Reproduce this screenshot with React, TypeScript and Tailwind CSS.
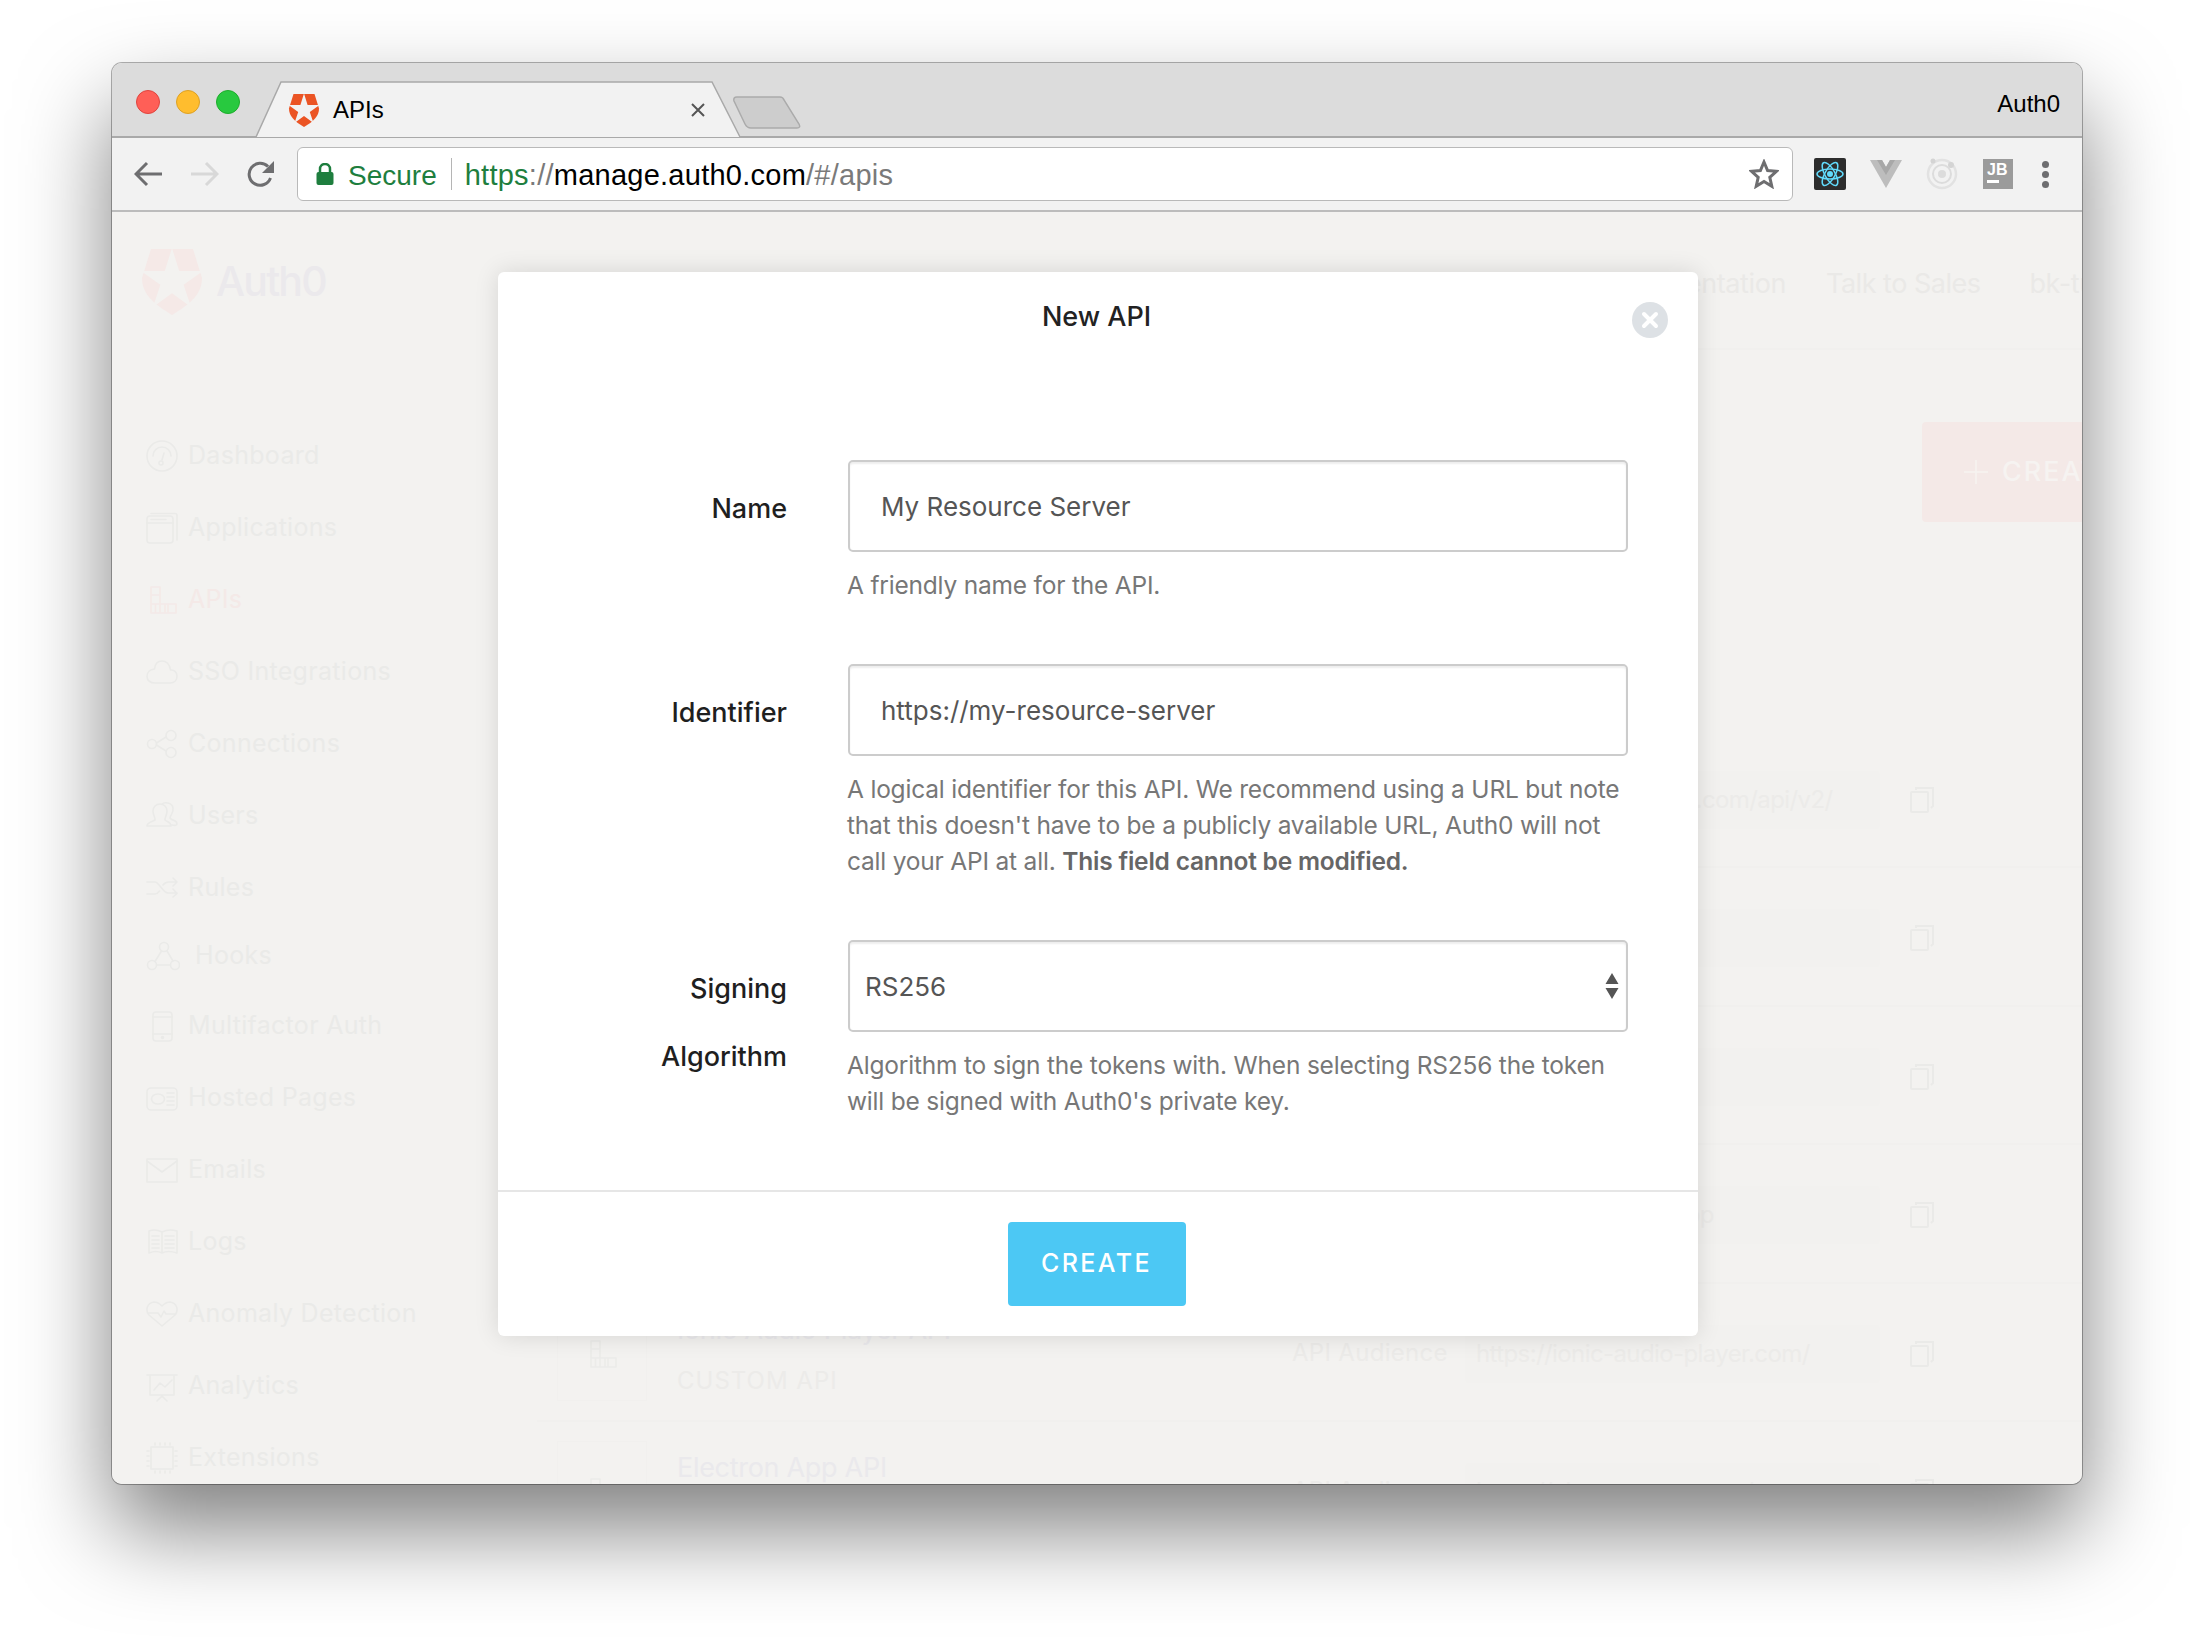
import React from "react";

const ui = "font-['Inter','Liberation_Sans',sans-serif]";
const chrome = "font-['Liberation_Sans',Arial,sans-serif]";

function Shield({ className, fill, star }: { className: string; fill: string; star: string }) {
  return (
    <svg viewBox="0 0 60 66" className={className}>
      <path d="M9 0H51L60 29C60 44 50 54 30 66C10 54 0 44 0 29Z" fill={fill} />
      <polygon fill={star} points="30,-1 37.2,22.1 61,22 41.6,35.8 49,58 30,44.2 11,58 18.4,35.8 -1,22 22.8,22.1" />
    </svg>
  );
}

const S = ({ children, w = 32, h = 32, vb }: { children: React.ReactNode; w?: number; h?: number; vb?: string }) => (
  <svg width={w} height={h} viewBox={vb ?? `0 0 ${w} ${h}`} fill="none" stroke="currentColor" strokeWidth="1.6" strokeLinecap="round" strokeLinejoin="round" className="shrink-0">
    {children}
  </svg>
);

const icons: Record<string, React.ReactNode> = {
  dashboard: <S><circle cx="16" cy="16" r="15" /><path d="M7 16a9 9 0 0 1 18 0M18 13l-2 7" /><circle cx="15" cy="23" r="2" /></S>,
  apps: <S><rect x="1" y="4" width="26" height="27" rx="3" /><path d="M1 11H27M5 7.500H20M5 1.500H29a2 2 0 0 1 2 2V28" /></S>,
  apis: <S><path d="M5 3H14V29H5ZM5 11H14M5 20H22V29H14M14 20H22M22 20H30V29H22M9.500 20V29M19 20V29" /></S>,
  sso: <S><path d="M9 27H24C28.500 27 31 24 31 20C31 16 28 13.500 24.500 14C24 8 20 5 16 5C12 5 9 8 8.500 13C4 13.500 1 16.500 1 20.500C1 24.500 4.500 27 9 27Z" /></S>,
  conn: <S><circle cx="6" cy="16" r="4.500" /><circle cx="25" cy="7.500" r="5" /><circle cx="25" cy="24.500" r="5" /><path d="M10.500 15L20 9M10.500 17L20 23" /></S>,
  users: <S><path d="M1 26C1 22 7 21.500 9 20C9.500 18 7 15 7 11C7 7 10 4 14 4C18 4 21 7 21 11C21 15 18.500 18 19 20C21 22 25 22 25 26ZM16 4C18 2 26 2 27 8C28 13 24 15 24 18C26 21 31 20 31 24C31 25 29 26 26 25" /></S>,
  rules: <S><path d="M1 10H9C13 10 17 21 22 21H31M27 17L31 21.500L27 25M1 22H9C11 22 12 21 13.500 19M17 13C18.500 11 20 10 23 10H31M27 6L31 10L27 14" /></S>,
  hooks: <S w={34}><circle cx="18" cy="7" r="4.500" /><circle cx="6" cy="25" r="4.500" /><circle cx="29" cy="25" r="4.500" /><path d="M15.500 11L9 21.500M21 11L27 21M11 25H24" /></S>,
  mfa: <S><rect x="7" y="2" width="19" height="29" rx="3" /><path d="M7 7H26M7 24H26" /><circle cx="16.500" cy="27.500" r="1" fill="currentColor" /></S>,
  hosted: <S><rect x="1" y="6" width="30" height="22" rx="4" /><ellipse cx="12" cy="17" rx="6.500" ry="5" /><path d="M21 11H28M21 15H28M21 19H28M21 23H28" /></S>,
  emails: <S><rect x="1" y="5" width="30" height="23" /><path d="M1 7L16 18L31 7" /></S>,
  logs: <S><path d="M3 5C8 3 12 4 16 6C20 4 24 3 31 5V27C25 25 20 25 16 27C12 25 8 25 3 27ZM16 6V27M6 10H13M6 14H13M6 18H13M6 22H13M19 10H28M19 14H28M19 18H28M19 22H28" /></S>,
  anomaly: <S><path d="M16 28L3 17C-1 12 1 5 8 4C12 4 14 6 16 8C18 6 20 4 24 4C31 5 33 12 29 17ZM3 15H12L15 19L18 13L20 16H30" /></S>,
  analytics: <S><path d="M1 5H31M4 5V25H28V5M16 25V27M11 31L16 26L21 31M8 20L14 13L19 17L26 10" /></S>,
  ext: <S><rect x="5" y="5" width="22" height="22" /><path d="M9 1V3M14 1V3M19 1V3M24 1V3M9 29V31M14 29V31M19 29V31M24 29V31M1 9H3M1 14H3M1 19H3M1 24H3M29 9H31M29 14H31M29 19H31M29 24H31" /></S>,
};

const nav = [
  { k: "dashboard", t: "Dashboard", c: "" },
  { k: "apps", t: "Applications", c: "" },
  { k: "apis", t: "APIs", c: "text-[#f4e9e7]" },
  { k: "sso", t: "SSO Integrations", c: "" },
  { k: "conn", t: "Connections", c: "" },
  { k: "users", t: "Users", c: "" },
  { k: "rules", t: "Rules", c: "" },
  { k: "hooks", t: "Hooks", c: "-mt-[4px]" },
  { k: "mfa", t: "Multifactor Auth", c: "-mt-[2px]" },
  { k: "hosted", t: "Hosted Pages", c: "" },
  { k: "emails", t: "Emails", c: "" },
  { k: "logs", t: "Logs", c: "" },
  { k: "anomaly", t: "Anomaly Detection", c: "" },
  { k: "analytics", t: "Analytics", c: "" },
  { k: "ext", t: "Extensions", c: "" },
];

const rows = [
  { t: "Auth0 Management API", s: "SYSTEM API", v: "https://bk-tuts.auth0.com/api/v2/" },
  { t: "Node API", s: "CUSTOM API", v: "https://node-api" },
  { t: "Ionic API", s: "CUSTOM API", v: "https://ionic-api" },
  { t: "Electron Desktop", s: "CUSTOM API", v: "https://a-desktop-app" },
  { t: "Ionic Audio Player API", s: "CUSTOM API", v: "https://ionic-audio-player.com/" },
  { t: "Electron App API", s: "CUSTOM API", v: "https://electron-app.com/" },
];

function Row({ r }: { r: (typeof rows)[number] }) {
  return (
    <div className="flex h-[138.400px] shrink-0 border-b-2 border-[#f1f0ee] text-[#ecebe9]">
      <div className="ml-[20px] flex h-[98px] w-[90px] shrink-0 items-center justify-center self-center border border-[#f1f0ee] pt-[4px]">
        {icons.apis}
      </div>
      <div className="ml-[30px] w-[615px] shrink-0 pt-[29px]">
        <div className="text-[27px] leading-[34px] tracking-[-0.3px] text-[#eae9ec]">{r.t}</div>
        <div className="mt-[16px] text-[24px] leading-[36px] tracking-[1px]">{r.s}</div>
      </div>
      <div className="flex h-[138px] w-[173px] shrink-0 items-center text-[24px] tracking-[0.3px]">API Audience</div>
      <div className="mt-[41px] flex h-[58px] w-[415px] shrink-0 items-center rounded-[4px] bg-[#f2f1ef] pl-[11px] text-[24px] whitespace-nowrap tracking-[-0.6px]">
        {r.v}
      </div>
      <svg width="24" height="28" viewBox="0 0 24 28" fill="none" stroke="#eaeae8" strokeWidth="2" className="ml-[30px] mt-[56px] shrink-0">
        <rect x="1" y="6" width="17" height="20" rx="1" />
        <path d="M6 4V2H23V20L21 22" />
      </svg>
    </div>
  );
}

function Background() {
  return (
    <div className={`flex h-full bg-[#f3f2f0] ${ui}`}>
      <aside className="w-[425px] shrink-0 pl-[30px] pt-[37px] text-[#eaeae8]">
        <div className="flex items-center">
          <Shield className="h-[66px] w-[60px]" fill="#f5e9e7" star="#f3f2f0" />
          <span className="ml-[14px] text-[41px] font-medium tracking-[-1.800px] text-[#ebe9ec]">Auth0</span>
        </div>
        <div className="mt-[105px]">
          {nav.map((n) => (
            <div key={n.t} className={`flex h-[72px] items-center pl-[4px] text-[25px] tracking-[0.3px] ${n.c}`}>
              {icons[n.k]}
              <span className={n.k === "hooks" ? "ml-[15px]" : "ml-[10px]"}>{n.t}</span>
            </div>
          ))}
        </div>
      </aside>
      <main className="min-w-0 flex-1 overflow-hidden">
        <header className="flex h-[138px] w-[1700px] items-center border-b-2 border-[#f1f0ee] pt-[8px] text-[27px] whitespace-nowrap text-[#eae9e7]">
          <span className="w-[1249px] text-right tracking-[-0.4px]">Documentation</span>
          <span className="ml-[40px] tracking-[-0.5px]">Talk to Sales</span>
          <span className="ml-[49px] tracking-[-0.4px]">bk-tutorials</span>
        </header>
        <div className="ml-[1385px] mt-[72px] flex h-[100px] w-[300px] items-center rounded-[4px] bg-[#f4e9e7] pl-[42px] text-[#f6f3f1]">
          <svg width="24" height="24" viewBox="0 0 24 24" fill="none" stroke="currentColor" strokeWidth="1.500" className="shrink-0"><path d="M12 0V24M0 12H24" /></svg>
          <span className="ml-[14px] text-[27px] font-medium tracking-[2px] whitespace-nowrap">CREATE API</span>
        </div>
        <div className="mt-[208px] w-[1700px]">
          {rows.map((r) => (
            <Row key={r.t} r={r} />
          ))}
        </div>
      </main>
    </div>
  );
}

function Field({ label, children, help, className }: { label: React.ReactNode; children: React.ReactNode; help: React.ReactNode; className: string }) {
  return (
    <div className={`flex ${className}`}>
      <div className="w-[289px] shrink-0 pt-[15px] text-right text-[27px] leading-[68px] font-medium text-[#1f1f1f]">{label}</div>
      <div className="ml-[60px] w-[790px] shrink-0">
        {children}
        <p className="mt-[15px] text-[24.500px] leading-[36px] tracking-[-0.2px] whitespace-pre-line text-[#777777]">{help}</p>
      </div>
    </div>
  );
}

const boxClass =
  "ml-[1px] flex h-[92px] w-[780px] items-center rounded-[5px] border-2 border-[#cccccc] bg-white text-[26px] text-[#555555] shadow-[inset_0_2px_2px_rgba(0,0,0,0.07)]";

function Modal() {
  return (
    <div className={`absolute left-[386px] top-[60px] flex h-[1064px] w-[1200px] flex-col rounded-[6px] bg-white shadow-[0_0_24px_rgba(0,0,0,0.12)] ${ui}`}>
      <h2 className="pr-[3px] pt-[30px] text-center text-[27px] leading-[30px] font-medium text-[#222222]">New API</h2>
      <button className="absolute right-[30px] top-[30px] flex h-[36px] w-[36px] items-center justify-center rounded-full bg-[#dde1e5]">
        <svg width="18" height="18" viewBox="0 0 18 18" fill="none" stroke="#fff" strokeWidth="4" strokeLinecap="round"><path d="M3 3L15 15M15 3L3 15" /></svg>
      </button>
      <div className="flex-1 pt-[128px]">
        <Field className="" label="Name" help="A friendly name for the API.">
          <div className={`${boxClass} pl-[31px]`}>My Resource Server</div>
        </Field>
        <Field
          className="mt-[61px]"
          label="Identifier"
          help={
            <>
              {"A logical identifier for this API. We recommend using a URL but note\nthat this doesn't have to be a publicly available URL, Auth0 will not\ncall your API at all. "}
              <strong className="font-semibold text-[#666666]">This field cannot be modified.</strong>
            </>
          }
        >
          <div className={`${boxClass} pl-[31px]`}>https://my-resource-server</div>
        </Field>
        <Field
          className="mt-[61px]"
          label={
            <>
              Signing
              <br />
              Algorithm
            </>
          }
          help={"Algorithm to sign the tokens with. When selecting RS256 the token\nwill be signed with Auth0's private key."}
        >
          <div className={`${boxClass} relative pl-[15px]`}>
            RS256
            <svg width="14" height="27" viewBox="0 0 14 27" fill="#555555" className="absolute right-[7px] top-[31px]">
              <path d="M7 0L13.500 11H.5ZM.5 15H13.500L7 26Z" />
            </svg>
          </div>
        </Field>
      </div>
      <div className="flex h-[146px] items-start justify-center border-t-2 border-[#e6e6e6] pr-[3px] pt-[30px]">
        <button className="flex h-[84px] w-[178px] items-center justify-center rounded-[4px] bg-[#4cc8f4] text-[25px] font-medium tracking-[2.400px] text-white">CREATE</button>
      </div>
    </div>
  );
}

function TabBar() {
  return (
    <div className={`relative h-[75px] shrink-0 border-b-2 border-[#a9a9a9] bg-[#dcdcdc] ${chrome}`}>
      <div className="flex h-full items-center gap-[16px] pl-[24px] pt-[5px]">
        <i className="h-[24px] w-[24px] rounded-full border border-[#e0443e] bg-[#ff5f57]" />
        <i className="h-[24px] w-[24px] rounded-full border border-[#dea123] bg-[#ffbd2e]" />
        <i className="h-[24px] w-[24px] rounded-full border border-[#1dad2b] bg-[#28c93f]" />
      </div>
      <svg width="560" height="57" viewBox="0 0 560 57" className="absolute left-[143px] top-[18px]" fill="none">
        <path d="M1 56L26 1H457L485 56Z" fill="#f2f2f2" />
        <path d="M0 56H1L26 1H457L485 56" stroke="#a9a9a9" strokeWidth="1.500" />
        <path d="M482 16H525Q528 16 529 19L544 43Q546 47 542 47H496Q492 47 490 43L479 20Q478 16 482 16Z" fill="#cdcdcd" stroke="#ababab" strokeWidth="1.500" />
      </svg>
      <div className="absolute left-[176px] top-[30px] flex h-[34px] items-center">
        <Shield className="h-[33px] w-[32px]" fill="#eb5424" star="#f2f2f2" />
        <span className="ml-[13px] text-[24px] text-black">APIs</span>
      </div>
      <svg width="16" height="16" viewBox="0 0 16 16" stroke="#555" strokeWidth="2" className="absolute left-[578px] top-[39px]"><path d="M2 2L14 14M14 2L2 14" /></svg>
      <span className="absolute right-[22px] top-[26px] text-[24px] leading-[30px] text-black">Auth0</span>
    </div>
  );
}

function Toolbar() {
  return (
    <div className={`flex h-[74px] shrink-0 items-center border-b-2 border-[#bcbcbc] bg-[#f2f2f2] ${chrome}`}>
      <div className="ml-[22px] flex w-[163px] items-center gap-[29px]">
        <svg width="28" height="26" viewBox="0 0 28 26" fill="none" stroke="#6e6e70" strokeWidth="3"><path d="M28 13H3M13 2L2 13L13 24" /></svg>
        <svg width="28" height="26" viewBox="0 0 28 26" fill="none" stroke="#d8d8d8" strokeWidth="3"><path d="M0 13H25M15 2L26 13L15 24" /></svg>
        <svg width="28" height="28" viewBox="0 0 28 28" fill="none" className="-ml-[1px]"><path d="M23.500 18A11 11 0 1 1 21 6.500" stroke="#6e6e70" strokeWidth="3" /><path d="M27 1V13H15Z" fill="#6e6e70" /></svg>
      </div>
      <div className="flex h-[54px] w-[1496px] shrink-0 items-center rounded-[6px] border border-[#b9b9b9] bg-white pl-[18px] pr-[13px] text-[29px] leading-none tracking-[0.25px]">
        <svg width="18" height="22" viewBox="0 0 18 22" className="shrink-0"><path d="M4 9V6a5 5 0 0 1 10 0V9" fill="none" stroke="#1e7e3e" strokeWidth="2.500" /><rect x="0.500" y="9" width="17" height="13" rx="2" fill="#1e7e3e" /></svg>
        <span className="ml-[14px] pt-[3px] text-[28px] tracking-normal text-[#1e7e3e]">Secure</span>
        <span className="ml-[14px] h-[32px] w-[1px] shrink-0 bg-[#b5b5b5]" />
        <span className="ml-[13px] whitespace-nowrap pt-[3px] text-[#1e7e3e]">
          https<span className="text-[#7a7a7a]">://</span><span className="text-black">manage.auth0.com</span><span className="text-[#7a7a7a]">/#/apis</span>
        </span>
        <svg width="30" height="30" viewBox="0 0 30 30" fill="none" stroke="#6e6e70" strokeWidth="3" className="ml-auto"><path d="M15 3L18.600 11.500L27.500 12.300L20.800 18.300L22.800 27.300L15 22.500L7.200 27.300L9.200 18.300L2.500 12.300L11.400 11.500Z" /></svg>
      </div>
      <div className="ml-[21px] flex items-center">
        <div className="flex h-[32px] w-[32px] items-center justify-center rounded-[2px] bg-[#2d2d2d]">
          <svg width="28" height="28" viewBox="-14 -14 28 28" fill="none" stroke="#61dafb" strokeWidth="1.500">
            <circle r="3" fill="#61dafb" stroke="none" />
            <ellipse rx="13" ry="5" />
            <ellipse rx="13" ry="5" transform="rotate(60)" />
            <ellipse rx="13" ry="5" transform="rotate(120)" />
          </svg>
        </div>
        <svg width="32" height="28" viewBox="0 0 32 28" className="ml-[24px]"><path d="M0 0H12L16 7L20 0H32L16 28Z" fill="#bdbdbd" /><path d="M7 0H12L16 7L20 0H25L16 15Z" fill="#a8a8a8" /></svg>
        <svg width="32" height="32" viewBox="0 0 32 32" fill="none" className="ml-[24px]"><circle cx="16" cy="16" r="14" stroke="#e2e2e2" strokeWidth="2.500" /><circle cx="16" cy="16" r="9" stroke="#dcdcdc" strokeWidth="2" /><circle cx="16" cy="16" r="4" fill="#dcdcdc" /><circle cx="25" cy="7" r="3" fill="#d4d4d4" /><circle cx="7" cy="3" r="2.500" fill="#d4d4d4" /></svg>
        <div className={`ml-[25px] flex h-[30px] w-[30px] flex-col bg-[#9b9b9b] pl-[4px] pt-[3px] ${chrome}`}>
          <span className="text-[16px] leading-[16px] font-bold text-white">JB</span>
          <i className="mt-[2px] h-[3px] w-[12px] bg-white" />
        </div>
        <div className="ml-[29px] flex flex-col gap-[3px]">
          <i className="h-[7px] w-[7px] rounded-full bg-[#6e6e70]" />
          <i className="h-[7px] w-[7px] rounded-full bg-[#6e6e70]" />
          <i className="h-[7px] w-[7px] rounded-full bg-[#6e6e70]" />
        </div>
      </div>
    </div>
  );
}

export default function App() {
  return (
    <div className="h-[1644px] w-[2194px] overflow-hidden bg-white pl-[112px] pt-[63px]">
      <div className="flex h-[1421px] w-[1970px] flex-col overflow-hidden rounded-[10px] shadow-[0_45px_90px_rgba(0,0,0,0.5),0_0_0_1px_rgba(0,0,0,0.3)]">
        <TabBar />
        <Toolbar />
        <div className="relative min-h-0 flex-1 overflow-hidden">
          <Background />
          <Modal />
        </div>
      </div>
    </div>
  );
}
